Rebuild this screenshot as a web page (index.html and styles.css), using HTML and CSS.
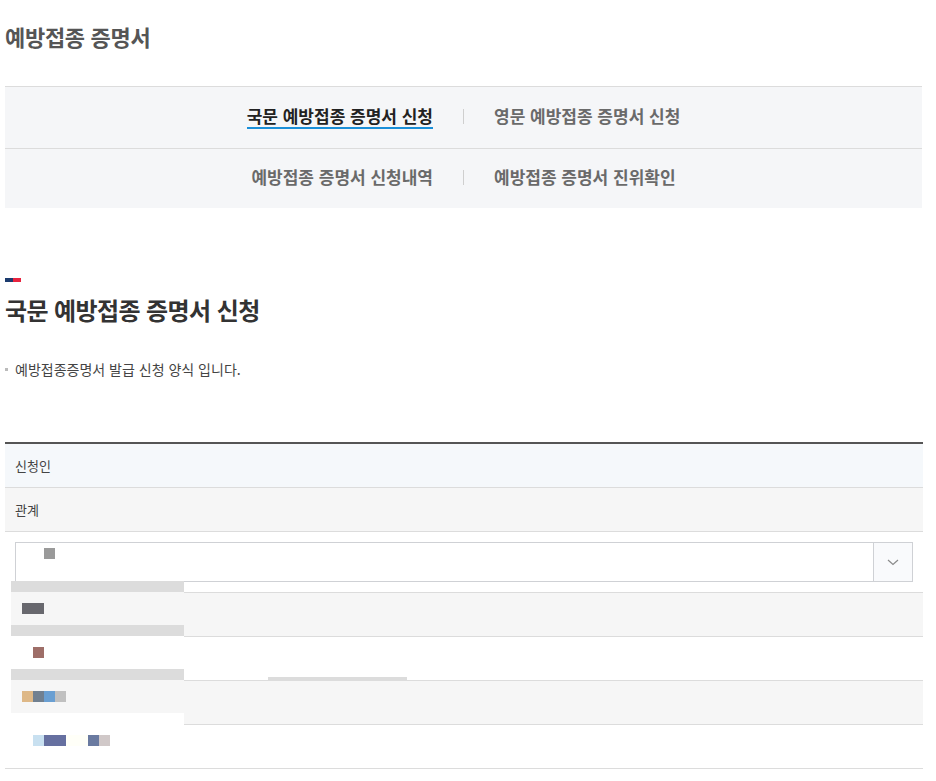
FILE: index.html
```html
<!DOCTYPE html>
<html lang="ko">
<head>
<meta charset="utf-8">
<title>예방접종 증명서</title>
<link rel="stylesheet" href="styles.css">
</head>
<body>
<div class="page">
  <h1 class="page-title">예방접종 증명서</h1>

  <nav class="tabs">
    <div class="tab-row">
      <a class="tab tab-left active">국문 예방접종 증명서 신청</a>
      <span class="tab-sep"></span>
      <a class="tab tab-right">영문 예방접종 증명서 신청</a>
    </div>
    <div class="tab-row">
      <a class="tab tab-left">예방접종 증명서 신청내역</a>
      <span class="tab-sep"></span>
      <a class="tab tab-right">예방접종 증명서 진위확인</a>
    </div>
  </nav>

  <section class="section">
    <div class="flag"><span class="flag-navy"></span><span class="flag-red"></span></div>
    <h2 class="section-title">국문 예방접종 증명서 신청</h2>
    <p class="desc"><span class="bullet"></span>예방접종증명서 발급 신청 양식 입니다.</p>

    <div class="form-table">
      <div class="row row-head">신청인</div>
      <div class="row row-gray">관계</div>
      <div class="row row-select">
        <div class="select">
          <div class="select-value"><span class="px c-999 w1"></span></div>
          <div class="select-btn">
            <svg width="12" height="7" viewBox="0 0 12 7"><path d="M1 1l5 4.5L11 1" fill="none" stroke="#8a8a8a" stroke-width="1.2"/></svg>
          </div>
        </div>
      </div>
      <div class="row row-gray row-empty"></div>
      <div class="row row-empty"></div>
      <div class="row row-gray row-empty"></div>
      <div class="row row-empty"></div>

      <ul class="dropdown">
        <li class="opt opt-gray"><span class="opt-body pad1"><span class="px c-686870 w2"></span></span></li>
        <li class="opt"><span class="opt-body pad2"><span class="px c-9e6e68 w1"></span></span></li>
        <li class="opt opt-gray"><span class="opt-body pad1"><span class="px c-deb887 w1"></span><span class="px c-718090 w1"></span><span class="px c-6a9fd2 w1"></span><span class="px c-c0c0c0 w1"></span></span></li>
        <li class="opt opt-last"><span class="opt-body pad2"><span class="px c-c8e0f0 w1"></span><span class="px c-6670a0 w2"></span><span class="px c-fffff8 w2"></span><span class="px c-6a7aa0 w1"></span><span class="px c-d0c8c8 w1"></span></span></li>
      </ul>
      <span class="scroll-bar"></span>
    </div>
  </section>
</div>
</body>
</html>
```
FILE: styles.css
```css
* { box-sizing: border-box; }
html, body { margin: 0; padding: 0; background: #fff; }
body {
  font-family: "Noto Sans CJK KR", "Noto Sans", sans-serif;
  color: #333;
}
.page {
  width: 918px;
  margin-left: 5px;
}
.page-title {
  margin: 0;
  padding-top: 20px;
  height: 86px;
  font-size: 22px;
  line-height: 32px;
  font-weight: 700;
  color: #555;
  letter-spacing: -0.3px;
}
.tabs {
  border-top: 1px solid #dcdcdc;
  background: #f5f6f8;
  width: 917px;
}
.tab-row {
  display: grid;
  grid-template-columns: 1fr 1px 1fr;
  align-items: center;
  height: 61px;
  padding-bottom: 3px;
}
.tab-row + .tab-row {
  border-top: 1px solid #dcdcdc;
  height: 60px;
}
.tab {
  font-size: 17px;
  font-weight: 700;
  letter-spacing: 0;
  color: #6a6a6a;
  line-height: 24px;
  text-decoration: none;
}
.tab-left { justify-self: end; margin-right: 30px; }
.tab-right { justify-self: start; margin-left: 30px; }
.tab.active {
  color: #222;
  border-bottom: 2px solid #1a8fd8;
  line-height: 22px;
  margin-top: 1px;
}
.tab-sep {
  width: 1px;
  height: 15px;
  background: #cfcfcf;
}
.section { padding-top: 70px; }
.flag {
  display: flex;
  height: 4px;
}
.flag-navy { width: 8px; background: #1c3b6e; }
.flag-red { width: 8px; background: #e8233e; }
.section-title {
  margin: 12px 0 0;
  font-size: 24px;
  line-height: 32px;
  font-weight: 700;
  letter-spacing: -0.6px;
  color: #333;
}
.desc {
  display: flex;
  align-items: center;
  margin: 33px 0 0;
  font-size: 14px;
  line-height: 20px;
  letter-spacing: 0;
  color: #444;
}
.bullet {
  width: 3px;
  height: 3px;
  background: #bbb;
  margin-right: 7px;
}
.form-table {
  position: relative;
  margin-top: 63px;
  border-top: 2px solid #555;
  width: 918px;
}
.row {
  height: 44px;
  border-bottom: 1px solid #dcdcdc;
  padding-left: 10px;
  font-size: 13px;
  line-height: 43px;
  color: #444;
  letter-spacing: 0;
}
.row-head { background: #f5f8fb; }
.row-gray { background: #f6f6f6; }
.row-select {
  height: 61px;
  padding: 10px 10px 0;
}
.select {
  display: flex;
  height: 40px;
  border: 1px solid #cfd1d5;
  background: #fff;
}
.select-value {
  flex: 1;
  padding: 5px 0 0 28px;
  line-height: 0;
}
.select-btn {
  width: 39px;
  border-left: 1px solid #cfd1d5;
  background: #f9fafc;
  display: flex;
  align-items: center;
  justify-content: center;
}
.px {
  display: inline-block;
  height: 11px;
  vertical-align: top;
}
.w1 { width: 11px; }
.w2 { width: 22px; }
.c-999 { background: #9a9a9a; }
.c-686870 { background: #68686e; }
.c-9e6e68 { background: #9e6e68; }
.c-deb887 { background: #deb887; }
.c-718090 { background: #718090; }
.c-6a9fd2 { background: #6a9fd2; }
.c-c0c0c0 { background: #c0c0c0; }
.c-c8e0f0 { background: #c8e0f0; }
.c-6670a0 { background: #6670a0; }
.c-fffff8 { background: #fffff8; }
.c-6a7aa0 { background: #6a7aa0; }
.c-d0c8c8 { background: #d0c8c8; }

.dropdown {
  position: absolute;
  left: 0;
  top: 137px;
  width: 179px;
  margin: 0;
  padding: 0;
  list-style: none;
  border-left: 6px solid #fff;
}
.opt {
  display: block;
  height: 44px;
  border-top: 11px solid #dcdcdc;
  background: #fff;
}
.opt-gray { background: #f6f6f6; }
.opt-last { border-top-color: #fff; }
.opt-body {
  display: flex;
  height: 33px;
  padding-top: 11px;
}
.pad1 { padding-left: 11px; }
.pad2 { padding-left: 22px; }
.scroll-bar {
  position: absolute;
  left: 263px;
  top: 233px;
  width: 139px;
  height: 3px;
  background: #dcdcdc;
}
```
